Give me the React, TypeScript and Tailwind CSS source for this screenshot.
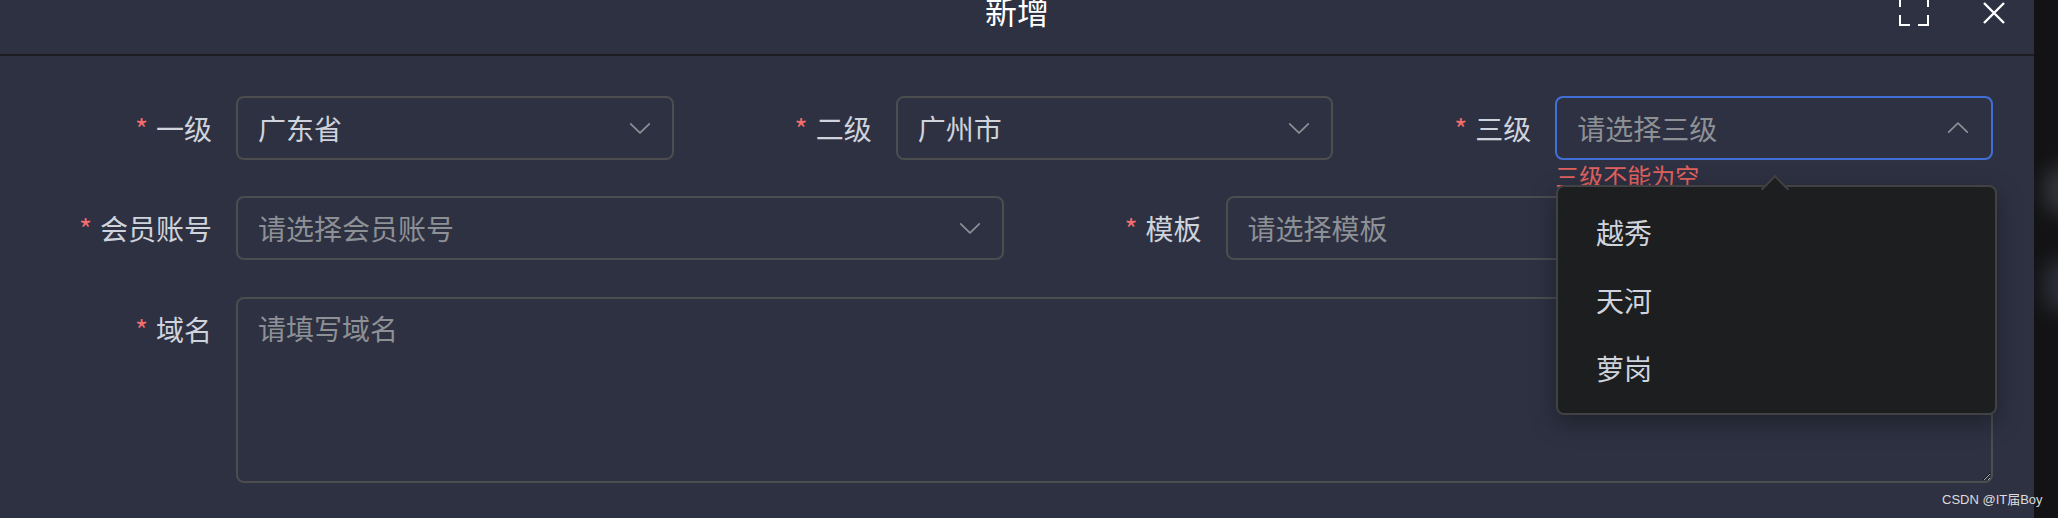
import React from "react";

function ArrowDown({ up }: { up?: boolean }) {
  return (
    <svg
      viewBox="0 0 1024 1024"
      className={up ? "h-[28px] w-[28px] shrink-0 rotate-180" : "h-[28px] w-[28px] shrink-0"}
      fill="#8d9095"
    >
      <path d="M831.872 340.864 512 652.672 192.128 340.864a30.592 30.592 0 0 0-42.752 0 29.12 29.12 0 0 0 0 41.6L489.664 714.24a32 32 0 0 0 44.672 0l340.288-331.712a29.12 29.12 0 0 0 0-41.728 30.592 30.592 0 0 0-42.752 0z" />
    </svg>
  );
}

function FormItem({ label, children }: { label: string; children: React.ReactNode }) {
  return (
    <div className="flex">
      <label className="w-[200px] shrink-0 pr-[24px] text-right text-[28px] leading-[64px] text-[#cfd3dc]">
        <span className="mr-[8px] text-[#f56c6c]">*</span>
        {label}
      </label>
      <div className="relative min-w-0 flex-1">{children}</div>
    </div>
  );
}

function Select({ value, placeholder, open }: { value?: string; placeholder?: string; open?: boolean }) {
  return (
    <div
      className={
        open
          ? "flex h-[64px] items-center rounded-[8px] border-2 border-[#416fd8] pl-[20px] pr-[19px]"
          : "flex h-[64px] items-center rounded-[8px] border-2 border-[#4c4d4f] pl-[20px] pr-[18px]"
      }
    >
      <span
        className={
          value
            ? "flex-1 truncate text-[28px] leading-[40px] text-[#cfd3dc]"
            : "flex-1 truncate text-[28px] leading-[40px] text-[#8d9095]"
        }
      >
        {value ?? placeholder}
      </span>
      <ArrowDown up={open} />
    </div>
  );
}

export default function App() {
  return (
    <div className="relative flex h-[518px] w-[2058px] overflow-hidden bg-[#131315] font-['Noto_Sans_CJK_SC',sans-serif]">
      <div className="relative w-[2034px] shrink-0 bg-[#2e3142]">
        {/* header */}
        <div className="relative h-[56px] border-b-2 border-[#1c1d21]">
          <div className="flex justify-center">
            <span className="mt-[-6px] text-[32px] leading-[32px] text-white">新增</span>
          </div>
          <div className="absolute right-[29px] top-[-4px] flex items-start gap-[54px]">
            <svg width="30" height="30" viewBox="0 0 30 30" fill="none" stroke="#ffffff" strokeWidth="2">
              <path d="M1 11V1H11M19 1H29V11M29 19V29H19M11 29H1V19" />
            </svg>
            <svg className="mt-[6px]" width="22" height="22" viewBox="0 0 22 22" fill="none" stroke="#ffffff" strokeWidth="2.4">
              <path d="M1 1L21 21M21 1L1 21" />
            </svg>
          </div>
        </div>

        {/* form */}
        <div className="pl-[36px] pr-[41px] pt-[40px]">
          <div className="grid grid-cols-3 gap-x-[22px]">
            <FormItem label="一级">
              <Select value="广东省" />
            </FormItem>
            <FormItem label="二级">
              <Select value="广州市" />
            </FormItem>
            <FormItem label="三级">
              <Select placeholder="请选择三级" open />
              <div className="absolute left-0 top-full pt-[4px] text-[24px] leading-[24px] text-[#e0625f]">
                三级不能为空
              </div>
            </FormItem>
          </div>

          <div className="mt-[36px] grid grid-cols-2 gap-x-[22px]">
            <FormItem label="会员账号">
              <Select placeholder="请选择会员账号" />
            </FormItem>
            <FormItem label="模板">
              <Select placeholder="请选择模板" />
            </FormItem>
          </div>

          <div className="mt-[37px]">
            <FormItem label="域名">
              <textarea
                placeholder="请填写域名"
                className="block h-[186px] w-full resize-y rounded-[8px] border-2 border-[#4c4d4f] bg-transparent px-[20px] pt-[8px] text-[28px] leading-[42px] text-[#cfd3dc] outline-none placeholder:text-[#8d9095]"
              />
            </FormItem>
          </div>
        </div>

        {/* dropdown */}
        <div className="absolute left-[1556px] top-[185px] w-[441px] rounded-[8px] border-2 border-[#414243] bg-[#1d1e1f] py-[11px] shadow-[0_8px_24px_rgba(0,0,0,0.35)]">
          <div className="absolute left-[207px] top-[-8px] h-[20px] w-[20px] rotate-45 border-l-2 border-t-2 border-[#414243] bg-[#1d1e1f]" />
          {["越秀", "天河", "萝岗"].map((t) => (
            <div key={t} className="flex h-[68px] items-center pl-[38px] text-[28px] text-[#cfd3dc]">
              {t}
            </div>
          ))}
        </div>
      </div>

      {/* right backdrop strip */}
      <div className="relative flex-1 overflow-hidden bg-[#131315]">
        <div className="absolute left-[10px] top-[165px] h-[50px] w-[40px] rounded-full bg-[#4a4d55] opacity-60 blur-[10px]" />
        <div className="absolute left-[10px] top-[258px] h-[55px] w-[40px] rounded-full bg-[#3e4250] opacity-60 blur-[10px]" />
      </div>

      {/* watermark */}
      <div className="absolute left-[1942px] top-[492px] whitespace-nowrap font-['Liberation_Sans','Noto_Sans_CJK_SC',sans-serif] text-[13px] leading-[16px] text-[#dcdcdc]">
        CSDN @IT届Boy
      </div>
    </div>
  );
}
